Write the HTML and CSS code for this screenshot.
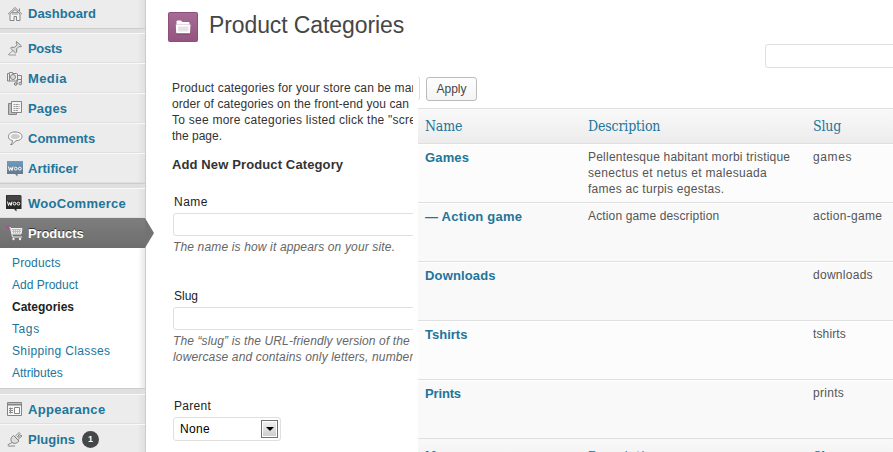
FILE: index.html
```html
<!DOCTYPE html>
<html lang="en">
<head>
<meta charset="utf-8">
<title>Product Categories</title>
<link rel="stylesheet" href="styles.css">
</head>
<body>
<nav class="sidebar">
  <a class="item first"><svg class="icon" viewBox="0 0 16 16"><path d="M1 8.200 8 1.500l7 6.700M12.500 2.500v3M3 8v6.500h4v-4h2.500v4H13V8L8 3.500z" fill="#f4f4f4" stroke="#858585"/><path d="M5 8h6M5 6.500h6" stroke="#999"/></svg><span class="t-dash">Dashboard</span></a>
  <div class="sep"></div>
  <a class="item"><svg class="icon" viewBox="0 0 16 16"><path d="M9.500 1.500 14.500 6l-1 1-1.500-.5-2.500 2.500.3 3L8.500 13 3.500 8.200l1-1 3 .2 2.500-2.500-.8-1.800z" fill="#ddd" stroke="#858585"/><path d="m6 10.500-5 4.500M2 15h7" stroke="#999" fill="none"/></svg><span class="t-posts">Posts</span></a>
  <a class="item"><svg class="icon" viewBox="0 0 16 16"><path d="M.5 3.500h2v-1h3v1h4l1 .5v7H.5z" fill="#eee" stroke="#858585"/><circle cx="6" cy="7" r="2.500" fill="#ddd" stroke="#858585"/><path d="M2.500 4v7" stroke="#858585"/><path d="M10.500 5.500h4V13M10 14V9.500h4" stroke="#858585" fill="none"/><circle cx="8.700" cy="14" r="1.300" fill="#ddd" stroke="#777"/><circle cx="13.300" cy="13.500" r="1.300" fill="#ddd" stroke="#777"/></svg><span class="t-media">Media</span></a>
  <a class="item"><svg class="icon" viewBox="0 0 16 16"><path d="M5 3.500H1.500v11h8V13" fill="#bbb" stroke="#858585"/><path d="M4.500 1.500h10v11h-10z" fill="#f5f5f5" stroke="#858585"/><path d="M6.500 4.500h6M6.500 6.500h6M6.500 8.500h6M6.500 10.500h5" stroke="#999" stroke-dasharray="2 .5"/></svg><span class="t-pages">Pages</span></a>
  <a class="item"><svg class="icon" viewBox="0 0 16 16"><path d="M5.500 10.500C2.500 10 1.500 8.500 1.500 6.500c0-3 3-4.500 6.500-4.500s7 1.500 7 4.500-3 4-6 4.200L5 14.500H3.500c1.500-1 2-2 2-4z" fill="#fafafa" stroke="#858585"/><path d="M3.500 6.500C4 4.500 6 4 8 4s4.500.5 5 2.500c-1 2-3 2.500-5 2.500S4 8.500 3.500 6.500z" fill="#ccc"/></svg><span class="t-comments">Comments</span></a>
  <a class="item"><svg class="icon woo" viewBox="0 0 16 16"><defs><linearGradient id="blue" x2="0" y2="1"><stop stop-color="#6d9cc3"/><stop offset="1" stop-color="#66727d"/></linearGradient></defs><path d="M0 1h16v13h-5.500v2.500L8 14H0z" fill="url(#blue)"/><path d="m1.500 6.500 1 4 1.300-3 1.200 3 1-4" fill="none" stroke="#fff"/><circle cx="8.700" cy="8.600" r="1.400" fill="none" stroke="#fff"/><circle cx="12.800" cy="8.600" r="1.400" fill="none" stroke="#fff"/></svg><span class="t-art">Artificer</span></a>
  <div class="sep"></div>
  <a class="item"><svg class="icon woo dark" viewBox="0 0 16 16"><path d="M.5 0h14l1 1v13h-5v2.500L8 14H0V.5z" fill="#292929"/><path d="M1 .500h14v5H1z" fill="#444"/><path d="m1.500 6.500 1 4 1.300-3 1.200 3 1-4" fill="none" stroke="#fff"/><circle cx="8.500" cy="8.600" r="1.400" fill="none" stroke="#fff"/><circle cx="12.400" cy="8.600" r="1.400" fill="none" stroke="#fff"/></svg><span class="t-woo">WooCommerce</span></a>
  <a class="item current"><svg class="icon cart" viewBox="0 0 16 16"><path d="M1 2.500h2.500L5.500 12H15" fill="none" stroke="#eee"/><path d="M4 3.500h11L14 9H5.300z" fill="#bbb" stroke="#f2f2f2"/><path d="M5 5.500h9M5 7.500h9" stroke="#eee" stroke-dasharray="1 1"/><circle cx="6.500" cy="14" r="1.200" fill="#eee"/><circle cx="13" cy="14" r="1.200" fill="#eee"/><path d="M-.5.500h3v3h-3z" fill="#b8489b"/></svg><span class="t-prod">Products</span><svg class="arrow" viewBox="0 0 9 30"><path d="M0 0 9 15 0 30z" fill="#737373"/></svg></a>
  <div class="submenu">
    <a class="s-prod">Products</a><a>Add Product</a><a class="on">Categories</a><a class="s-tags">Tags</a><a class="s-ship">Shipping Classes</a><a>Attributes</a>
  </div>
  <div class="sep last"></div>
  <a class="item"><svg class="icon" viewBox="0 0 16 16"><path d="M.5 1.500h14v13H.5z" fill="#f5f5f5" stroke="#858585"/><path d="M1 3.500h13" stroke="#858585" stroke-width="2"/><path d="M2 7.500h4M2 9.500h4M2 11.500h4M3.500 6.500v6" stroke="#8a8a8a"/><path d="M7.500 6.500h5v6h-5z" fill="#fff" stroke="#858585"/></svg><span class="t-app">Appearance</span></a>
  <a class="item"><svg class="icon" viewBox="0 0 16 16"><path d="m6.500 4.500 5.500 5.500c-2 2.500-4.500 3-7 1.500C3 9 4 6 6.500 4.500z" fill="#ddd" stroke="#808080"/><path d="m8 5.500 4-4 1 1-3 4m1 2 4-3.500-1-1-3 2.500M5 11.500C3 13 .5 13 1 14.500s4 0 7 .5" fill="none" stroke="#858585"/></svg><span>Plugins</span><span class="badge">1</span></a>
</nav>
<main class="form">
  <header class="title">
    <svg class="title-icon" viewBox="0 0 30 30"><defs><linearGradient id="plum" x2="0" y2="1"><stop stop-color="#a66c96"/><stop offset="1" stop-color="#93547f"/></linearGradient></defs><rect x=".5" y=".5" width="29" height="29" rx="1" fill="url(#plum)" stroke="#8c4f79"/><path d="M8.500 9.500q0-1 1-1h3.500l1.500 1.500H20.500q1 0 1 1V12.500H8.500z" fill="#fff"/><path d="M7.800 12.500h14.700L22 20.500q0 1-1 1H9.200q-1 0-1-1z" fill="#fff"/><path d="M10 14.500h10.500v5H10z" fill="#e6e2e6"/><path d="M8.500 22h13" stroke="#764464"/></svg>
    <h1>Product Categories</h1>
  </header>
  <div class="intro"><p class="l1">Product categories for your store can be man</p><p class="l2">order of categories on the front-end you can</p><p class="l3">To see more categories listed click the "scre</p><p>the page.</p></div>
  <h3>Add New Product Category</h3>
  <div class="field"><label class="f-name">Name</label><div class="input"></div><p>The name is how it appears on your site.</p></div>
  <div class="field second"><label>Slug</label><div class="input"></div><p class="h2t">The “slug” is the URL-friendly version of the</p><p>lowercase and contains only letters, number</p></div>
  <div class="field third"><label class="f-parent">Parent</label><div class="select"><span>None</span><i></i></div></div>
</main>
<section class="list">
  <div class="search-row"><div class="search"></div></div>
  <div class="actions"><span class="stub"></span><button>Apply</button></div>
  <div class="table">
    <div class="row head"><span class="th">Name</span><span class="th">Description</span><span class="th">Slug</span></div>
    <div class="row"><b class="g">Games</b><div><p class="d1">Pellentesque habitant morbi tristique</p><p class="d2">senectus et netus et malesuada</p><p class="d3">fames ac turpis egestas.</p></div><span class="sg">games</span></div>
    <div class="row alt"><b class="ag">— Action game</b><div><p class="d4">Action game description</p></div><span class="sa">action-game</span></div>
    <div class="row alt"><b class="g">Downloads</b><div></div><span class="sa">downloads</span></div>
    <div class="row"><b>Tshirts</b><div></div><span class="d4">tshirts</span></div>
    <div class="row alt"><b class="pr">Prints</b><div></div><span class="sa">prints</span></div>
    <div class="row head"><span class="th">Name</span><span class="th">Description</span><span class="th">Slug</span></div>
  </div>
</section>
</body>
</html>
```
FILE: styles.css
```css
* { box-sizing: border-box; }
body { margin: 0; width: 893px; height: 452px; overflow: hidden; display: flex; background: #fff; color: #333; font: 12px/16px "Liberation Sans", sans-serif; }
p, h1, h3 { margin: 0; }
.sidebar { flex: none; width: 146px; height: 452px; border-right: 1px solid #ccc; background: linear-gradient(90deg, #ececec 137px, #e0e0e0 145px); }
.item { height: 30px; display: flex; align-items: center; padding-left: 7px; border-top: 1px solid #f9f9f9; border-bottom: 1px solid #dfdfdf; color: #21759b; font-size: 13px; font-weight: bold; white-space: nowrap; }
.item span { position: relative; top: 1px; }
.item.first { height: 28px; border: 0; }
.item.first span { top: 0; }
.icon { flex: none; width: 16px; height: 16px; margin-right: 5px; overflow: visible; fill: none; }
.icon.dark { margin-left: -1px; margin-right: 6px; }
.t-woo { letter-spacing: .27px; }
.t-app { letter-spacing: .3px; }
.t-media { letter-spacing: .4px; }
.t-pages { letter-spacing: .2px; }
.t-posts { letter-spacing: -.3px; }
.t-prod { letter-spacing: -.1px; }
.sep { height: 5px; background: #dfdfdf; border-top: 1px solid #ccc; }
.sep.last { height: 6px; }
.item.current { position: relative; border: 0; background: linear-gradient(#7e7e7e, #6d6d6d); color: #fff; text-shadow: 0 -1px 0 #333; }
.arrow { position: absolute; left: 145px; top: 0; width: 9px; height: 30px; }
.submenu { height: 140px; padding: 4px 0 0 12px; background: linear-gradient(90deg, #fff 138px, #e8e8e8 145px); display: flex; flex-direction: column; color: #21759b; }
.submenu a { height: 22px; line-height: 22px; white-space: nowrap; }
.submenu .on { color: #222; font-weight: bold; }
.s-prod { letter-spacing: .15px; }
.s-tags { letter-spacing: .6px; }
.s-ship { letter-spacing: .36px; }
.item .badge { width: 17px; height: 17px; margin-left: 7px; border-radius: 9px; background: #464646; color: #fff; font-size: 9px; line-height: 17px; text-align: center; top: 0; }
.form { flex: none; width: 267px; overflow: hidden; padding-left: 22px; white-space: nowrap; }
.title { display: flex; height: 50px; padding-top: 12px; }
.title-icon { flex: none; width: 30px; height: 30px; margin-right: 11px; }
h1 { font-size: 23px; line-height: 27px; font-weight: normal; color: #464646; letter-spacing: -.1px; }
.intro { padding: 30px 0 0 4px; }
.l1 { letter-spacing: .14px; }
.l2 { letter-spacing: .08px; }
.l3 { letter-spacing: .25px; }
h3 { font-size: 13px; line-height: 18px; margin: 12px 0 0 4px; letter-spacing: .12px; }
.field { padding-left: 5px; height: 94px; margin-top: 20px; }
.field label { display: block; margin-left: 1px; line-height: 16px; color: #222; }
.field .f-name { letter-spacing: .5px; }
.field .f-parent { letter-spacing: .3px; }
.input { height: 23px; width: 300px; margin: 3px 0 3px; border: 1px solid #dfdfdf; border-radius: 3px; background: #fff; }
.field p { font-style: italic; color: #666; letter-spacing: .15px; }
.field .h2t { letter-spacing: .12px; }
.field.second { margin-top: 0; height: 110px; }
.field.third { margin-top: 0; }
.select { width: 108px; height: 24px; margin-top: 3px; padding: 0 2px 0 6px; border: 1px solid #dfdfdf; border-radius: 3px; display: flex; align-items: center; justify-content: space-between; color: #000; letter-spacing: .3px; }
.select i { width: 17px; height: 18px; border: 1px solid #707070; box-shadow: inset 0 0 0 1px #fff; background: linear-gradient(#f2f2f2, #ccc); display: flex; align-items: center; justify-content: center; }
.select i::after { content: ""; border: 4px solid transparent; border-top-color: #000; border-bottom: 0; }
.list { flex: none; width: 475px; margin-left: 5px; overflow: hidden; }
.search-row { height: 77px; padding: 44px 0 0 347px; }
.search { width: 200px; height: 24px; border: 1px solid #dfdfdf; border-radius: 3px; }
.actions { display: flex; height: 31px; }
.stub { width: 2px; height: 23px; margin-right: 6px; border: 1px solid #dfdfdf; border-left: 0; border-radius: 0 3px 3px 0; }
button { width: 51px; height: 24px; padding: 0; border: 1px solid #bbb; border-radius: 3px; background: linear-gradient(#fefefe, #f4f4f4); color: #464646; font: 12px "Liberation Sans", sans-serif; }
.row { display: grid; grid-template-columns: 163px 225px 80px; height: 59px; padding: 4px 0 0 7px; background: #fcfcfc; border-bottom: 1px solid #dfdfdf; border-top: 1px solid #fff; color: #555; white-space: nowrap; }
.row.alt { background: #f9f9f9; }
.row.head { height: 36px; padding-top: 8px; border-top: 1px solid #dfdfdf; background: linear-gradient(#f9f9f9, #ececec); }
.row.head:last-child { border-top: 0; padding-top: 9px; }
.row b { font-size: 13px; line-height: 17px; color: #21759b; }
.g { letter-spacing: .15px; }
.ag { letter-spacing: .24px; }
.pr { letter-spacing: -.15px; }
.d1 { letter-spacing: .22px; }
.d2 { letter-spacing: .32px; }
.d3 { letter-spacing: .26px; }
.d4 { letter-spacing: .14px; }
.sa { letter-spacing: .28px; }
.sg { letter-spacing: .6px; }
.th { font: 14px/18px "DejaVu Serif Condensed", "DejaVu Serif", serif; font-stretch: condensed; color: #21759b; letter-spacing: -.15px; }
```
